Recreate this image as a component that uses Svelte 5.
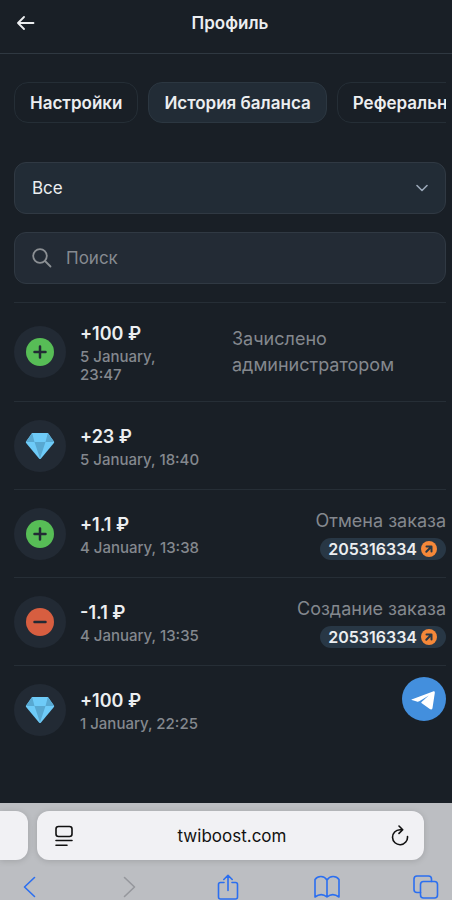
<script>
	const tabs = ['Настройки', 'История баланса', 'Реферальная система'];

	const operations = [
		{ icon: 'plus', amount: '+100 ₽', date: '5 January, 23:47', note: 'Зачислено администратором' },
		{ icon: 'gem', amount: '+23 ₽', date: '5 January, 18:40' },
		{ icon: 'plus', amount: '+1.1 ₽', date: '4 January, 13:38', note: 'Отмена заказа', order: '205316334' },
		{ icon: 'minus', amount: '-1.1 ₽', date: '4 January, 13:35', note: 'Создание заказа', order: '205316334' },
		{ icon: 'gem', amount: '+100 ₽', date: '1 January, 22:25' }
	];

	let active = 'История баланса';
	let filter = 'all';
	let search = '';
</script>

<div class="screen">
	<div class="app">
		<header>
			<button class="back" aria-label="Назад">
				<svg width="20" height="14" viewBox="0 0 20 14"><path d="M8 1 2 7l6 6M2.300 7H17.500" /></svg>
			</button>
			<h1>Профиль</h1>
		</header>

		<main>
			<nav class="tabs">
				{#each tabs as tab}
					<button class="tab" class:active={active === tab} on:click={() => (active = tab)}>{tab}</button>
				{/each}
			</nav>

			<div class="field">
				<select bind:value={filter} aria-label="Тип операции">
					<option value="all">Все</option>
					<option value="in">Пополнения</option>
					<option value="out">Списания</option>
				</select>
				<svg class="chevron" width="12" height="8" viewBox="0 0 12 8"><path d="M1 1.500 6 6.500 11 1.500" /></svg>
			</div>

			<div class="field">
				<svg class="loupe" width="20" height="20" viewBox="0 0 20 20"><circle cx="8" cy="8" r="6.800" /><path d="m13 13 5.500 5.500" /></svg>
				<input type="text" bind:value={search} placeholder="Поиск" aria-label="Поиск" />
			</div>

			<ul class="operations">
				{#each operations as op}
					<li>
						<span class="icon">
							{#if op.icon === 'gem'}
								<svg width="30" height="28" viewBox="0 0 30 28">
									<path fill="#6ecbf8" d="M7 1h16l6 8.500c.3.500.3 1-.1 1.500L16 26.500c-.6.700-1.400.700-2 0L1.100 11c-.4-.500-.4-1-.1-1.500z" />
									<path fill="#58a8d1" d="M7.200 1.200 9.500 10H1zM22.800 1.200 20.500 10H29zM9.500 10h11L15 26.500z" />
								</svg>
							{:else}
								<svg width="28" height="28" viewBox="0 0 28 28">
									<circle cx="14" cy="14" r="14" fill={op.icon === 'plus' ? '#57bd56' : '#d75e40'} />
									<path class="sign" d={op.icon === 'plus' ? 'M8.500 14h11M14 8.500v11' : 'M8.500 14h11'} />
								</svg>
							{/if}
						</span>
						<div class="info">
							<strong>{op.amount}</strong>
							<time>{op.date}</time>
						</div>
						{#if op.note}
							<div class="note" class:linked={op.order}>
								<span>{op.note}</span>
								{#if op.order}
									<a class="order" href="#{op.order}">
										{op.order}
										<svg width="16" height="16" viewBox="0 0 16 16">
											<circle cx="8" cy="8" r="8" fill="#f58839" />
											<path d="M5.500 5.500h5v5M10.500 5.500 5.300 10.700" />
										</svg>
									</a>
								{/if}
							</div>
						{/if}
					</li>
				{/each}
			</ul>
		</main>

		<a class="telegram" href="#telegram" aria-label="Telegram">
			<svg width="44" height="44" viewBox="0 0 44 44">
				<path fill="#fff" d="M9.600 22.600 31 14.500c1.300-.5 2 .2 1.800 1.500l-2.300 15c-.3 1.500-1.500 1.900-2.700 1l-8-5.700c-.7-.5-.7-1 0-1.600l7-6.200-9.500 5.700c-.8.500-1.600.6-2.500.3l-5-1.400c-.7-.2-.8-.3-.2-.5z" />
			</svg>
		</a>
	</div>

	<footer>
		<div class="address-row">
			<div class="neighbour"></div>
			<div class="address">
				<button aria-label="Меню страницы">
					<svg width="18" height="22" viewBox="0 0 18 22"><rect x="1" y="1.500" width="16" height="10" rx="2.500" /><path d="M1 15.500h16M1 20.200h11" /></svg>
				</button>
				<span>twiboost.com</span>
				<button aria-label="Обновить">
					<svg width="18" height="22" viewBox="0 0 18 22"><path d="M16.500 11.500A7.500 7.500 0 1 1 9 4.700h2.500M8 1l3.700 3.700L8 8.400" /></svg>
				</button>
			</div>
		</div>
		<div class="toolbar">
			<button aria-label="Назад"><svg width="26" height="26" viewBox="0 0 26 26"><path d="M17.500 3.500 7.500 13l10 9.500" /></svg></button>
			<button aria-label="Вперёд" disabled><svg width="26" height="26" viewBox="0 0 26 26"><path d="m8.500 3.500 10 9.500-10 9.500" /></svg></button>
			<button aria-label="Поделиться"><svg width="26" height="26" viewBox="0 0 26 26"><path d="M9 8.500H5.500a2 2 0 0 0-2 2V23a2 2 0 0 0 2 2h15a2 2 0 0 0 2-2V10.500a2 2 0 0 0-2-2H17M13 16.500V1.500M8.800 5.500 13 1.300l4.200 4.200" /></svg></button>
			<button aria-label="Закладки"><svg width="26" height="26" viewBox="0 0 26 26"><path d="M13 6v17c-3.500-3-8-3-12 0V5.500c3-4 9-4 12 .5 3-4.500 9-4.500 12-.5V23c-4-3-8.500-3-12 0" /></svg></button>
			<button aria-label="Вкладки"><svg width="26" height="26" viewBox="0 0 26 26"><rect x="7.500" y="7.500" width="17" height="16.500" rx="3" /><path d="M7.500 18.500H4a3 3 0 0 1-3-3V5a3 3 0 0 1 3-3h11.500a3 3 0 0 1 3 3v2.500" /></svg></button>
		</div>
	</footer>
</div>

<style>
	:global(body) {
		background: #191f26;
	}
	.screen {
		display: flex;
		flex-direction: column;
		height: 100vh;
		overflow: hidden;
		color: #eceef0;
		font-family: Inter, 'Liberation Sans', sans-serif;
		font-size: 17px;
	}
	button,
	input,
	select {
		font: inherit;
		color: inherit;
	}
	button {
		padding: 0;
		border: none;
		background: none;
		cursor: pointer;
	}
	svg {
		display: block;
		fill: none;
		stroke-linecap: round;
		stroke-linejoin: round;
	}
	.app {
		position: relative;
		display: flex;
		flex-direction: column;
		flex: 1;
		min-height: 0;
		background: #191f26;
	}
	header {
		display: grid;
		grid-template-columns: 36px 1fr 36px;
		align-items: center;
		height: 46px;
		padding: 0 8px 7px 16px;
		border-bottom: 1px solid #2f3841;
	}
	.back svg {
		stroke: #eceef0;
		stroke-width: 1.800;
	}
	h1 {
		margin: 0;
		font-size: 17px;
		font-weight: 600;
		text-align: center;
	}
	main {
		flex: 1;
		min-height: 0;
		padding: 28px 6px 0 14px;
		overflow: hidden;
	}
	.tabs {
		display: flex;
		gap: 10px;
		margin-bottom: 39px;
		overflow: hidden;
	}
	.tab {
		flex: none;
		height: 41px;
		padding: 0 15px;
		border: 1px solid #252e36;
		border-radius: 14px;
		font-weight: 600;
		white-space: nowrap;
	}
	.tab.active {
		background: #222c36;
		border-color: #2c3741;
	}
	.field {
		display: flex;
		align-items: center;
		box-sizing: border-box;
		height: 52px;
		margin-bottom: 18px;
		padding: 0 17px;
		border: 1px solid #303943;
		border-radius: 12px;
		background: #232b35;
	}
	.field:has(select) {
		background: #222c36;
	}
	select,
	input {
		flex: 1;
		min-width: 0;
		height: 100%;
		padding: 0;
		border: none;
		outline: none;
		background: none;
		appearance: none;
	}
	option {
		background: #222c36;
	}
	input::placeholder {
		color: #868a90;
		opacity: 1;
	}
	.chevron {
		stroke: #9ba8b8;
		stroke-width: 1.600;
	}
	.loupe {
		margin-right: 14px;
		stroke: #8c9094;
		stroke-width: 1.800;
	}
	.operations {
		margin: 0;
		padding: 0;
		list-style: none;
	}
	li {
		display: flex;
		align-items: center;
		box-sizing: border-box;
		min-height: 88px;
		padding: 17px 0;
		border-top: 1px solid #262e36;
	}
	.icon {
		display: flex;
		align-items: center;
		justify-content: center;
		flex: none;
		width: 52px;
		height: 52px;
		margin-right: 14px;
		border-radius: 50%;
		background: #222a34;
	}
	.sign {
		stroke: #222a34;
		stroke-width: 2.500;
	}
	.info {
		flex: 1;
	}
	strong {
		display: block;
		font-size: 18px;
		font-weight: 600;
		line-height: 28px;
	}
	time {
		display: block;
		color: #84888e;
		font-size: 15px;
		font-weight: 500;
		line-height: 18px;
	}
	.note {
		width: 214px;
		color: #84888e;
		font-size: 18px;
		line-height: 26px;
		margin-left: 48px;
	}
	.linked {
		display: flex;
		flex-direction: column;
		align-items: flex-end;
		gap: 4px;
		width: auto;
	}
	.order {
		display: flex;
		align-items: center;
		gap: 4px;
		height: 22px;
		padding: 0 9px 0 8px;
		border-radius: 11px;
		background: #283745;
		color: #eceef0;
		font-size: 16px;
		font-weight: 600;
		line-height: 22px;
		text-decoration: none;
	}
	.order svg {
		stroke: none;
	}
	.order path {
		stroke: #283745;
		stroke-width: 2;
	}
	.telegram {
		position: absolute;
		right: 6px;
		bottom: 82px;
		border-radius: 50%;
		background: #438fdd;
	}
	footer {
		flex: none;
		box-sizing: border-box;
		height: 97px;
		padding-top: 8px;
		background: #bcbec2;
		color: #111;
	}
	.address-row {
		display: flex;
		gap: 9px;
		height: 49px;
		padding-right: 28px;
	}
	.neighbour {
		flex: none;
		width: 28px;
		border-radius: 0 12px 12px 0;
		background: #f1f1f4;
		box-shadow: 0 1px 6px rgba(0, 0, 0, 0.15);
	}
	.address {
		display: flex;
		align-items: center;
		justify-content: space-between;
		flex: 1;
		padding: 0 15px 0 18px;
		border-radius: 12px;
		background: #f1f1f4;
		box-shadow: 0 1px 6px rgba(0, 0, 0, 0.15);
	}
	.address svg {
		stroke: #111;
		stroke-width: 1.600;
	}
	.toolbar {
		display: flex;
		justify-content: space-between;
		padding: 14px 13px 0 17px;
	}
	.toolbar svg {
		stroke: #2b6ff0;
		stroke-width: 1.600;
	}
	.toolbar button:disabled svg {
		stroke: #95979c;
	}
</style>
